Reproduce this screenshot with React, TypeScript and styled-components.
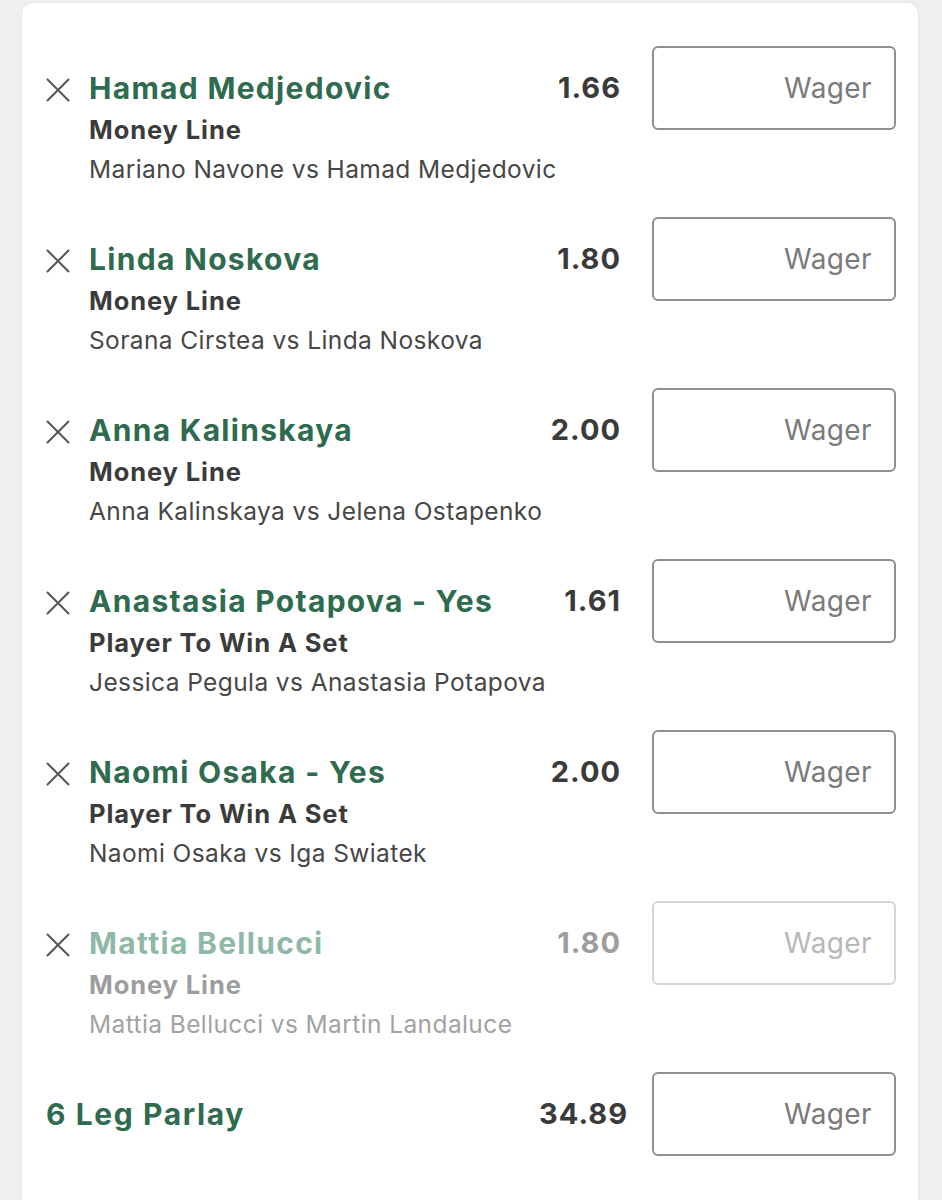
import styled, { createGlobalStyle } from 'styled-components';

const GlobalStyle = createGlobalStyle`
  html, body {
    margin: 0;
    padding: 0;
    background: #efefef;
  }
  body {
    font-family: Inter, "Noto Sans", "Liberation Sans", sans-serif;
    -webkit-font-smoothing: antialiased;
  }
`;

const Page = styled.div`
  padding: 3px 24px 0 22px;
`;

const Card = styled.div`
  background: #ffffff;
  border-radius: 10px;
  min-height: 1240px;
  padding: 43px 22px 0 24px;
  box-sizing: border-box;
  box-shadow: 0 0 0 1px #e6e6e6;
`;

const Row = styled.div`
  display: flex;
  align-items: flex-start;
  height: 171px;
`;

const ParlayRow = styled.div`
  display: flex;
  align-items: center;
  height: 84px;
`;

const RemoveButton = styled.button`
  all: unset;
  width: 24px;
  height: 24px;
  margin-top: 32px;
  margin-right: 19px;
  flex-shrink: 0;
  cursor: pointer;
  display: flex;
`;

const Info = styled.div`
  flex: 1;
  margin-top: 22px;
  min-width: 0;
`;

const Selection = styled.div<{ $faded?: boolean }>`
  font-size: 30px;
  font-weight: 700;
  line-height: 40px;
  letter-spacing: 1.3px;
  white-space: nowrap;
  color: ${(p) => (p.$faded ? '#8fb9a6' : '#2e6b4f')};
`;

const Market = styled.div<{ $faded?: boolean }>`
  font-size: 25.5px;
  font-weight: 700;
  line-height: 44px;
  letter-spacing: 0.9px;
  color: ${(p) => (p.$faded ? '#9d9d9d' : '#3b3b3b')};
`;

const Matchup = styled.div<{ $faded?: boolean }>`
  font-size: 24.5px;
  font-weight: 400;
  line-height: 34px;
  letter-spacing: 0.4px;
  color: ${(p) => (p.$faded ? '#a3a3a3' : '#474747')};
`;

const ParlayTitle = styled.div`
  flex: 1;
  font-size: 30px;
  font-weight: 700;
  color: #2e6b4f;
  letter-spacing: 1.6px;
`;

const Odds = styled.div<{ $faded?: boolean; $gap?: number; $top?: boolean }>`
  font-size: 29px;
  font-weight: 700;
  line-height: 40px;
  letter-spacing: 1px;
  margin-top: ${(p) => (p.$top ? '22px' : '0')};
  margin-right: ${(p) => p.$gap ?? 31}px;
  color: ${(p) => (p.$faded ? '#9d9d9d' : '#3a3a3a')};
  text-align: right;
`;

const WagerInput = styled.input<{ $faded?: boolean }>`
  width: 244px;
  height: 84px;
  box-sizing: border-box;
  flex-shrink: 0;
  border: 2px solid ${(p) => (p.$faded ? '#d6d6d6' : '#8f8f8f')};
  border-radius: 6px;
  padding: 0 22px;
  font-family: inherit;
  font-size: 28px;
  letter-spacing: 0.4px;
  text-align: right;
  background: #fff;
  outline: none;
  &::placeholder {
    color: ${(p) => (p.$faded ? '#b8b8b8' : '#7a7a7a')};
  }
`;

interface Leg {
  id: number;
  selection: string;
  market: string;
  matchup: string;
  odds: string;
  faded?: boolean;
}

const legs: Leg[] = [
  { id: 1, selection: 'Hamad Medjedovic', market: 'Money Line', matchup: 'Mariano Navone vs Hamad Medjedovic', odds: '1.66' },
  { id: 2, selection: 'Linda Noskova', market: 'Money Line', matchup: 'Sorana Cirstea vs Linda Noskova', odds: '1.80' },
  { id: 3, selection: 'Anna Kalinskaya', market: 'Money Line', matchup: 'Anna Kalinskaya vs Jelena Ostapenko', odds: '2.00' },
  { id: 4, selection: 'Anastasia Potapova - Yes', market: 'Player To Win A Set', matchup: 'Jessica Pegula vs Anastasia Potapova', odds: '1.61' },
  { id: 5, selection: 'Naomi Osaka - Yes', market: 'Player To Win A Set', matchup: 'Naomi Osaka vs Iga Swiatek', odds: '2.00' },
  { id: 6, selection: 'Mattia Bellucci', market: 'Money Line', matchup: 'Mattia Bellucci vs Martin Landaluce', odds: '1.80', faded: true },
];

const CloseIcon = () => (
  <svg width="24" height="24" viewBox="0 0 24 24" fill="none">
    <path d="M1.5 1.5 L22.5 22.5 M22.5 1.5 L1.5 22.5" stroke="#555" strokeWidth="2" strokeLinecap="round" />
  </svg>
);

export default function App() {
  return (
    <>
      <GlobalStyle />
      <Page>
        <Card>
          {legs.map((leg) => (
            <Row key={leg.id}>
              <RemoveButton aria-label="Remove">
                <CloseIcon />
              </RemoveButton>
              <Info>
                <Selection $faded={leg.faded}>{leg.selection}</Selection>
                <Market $faded={leg.faded}>{leg.market}</Market>
                <Matchup $faded={leg.faded}>{leg.matchup}</Matchup>
              </Info>
              <Odds $faded={leg.faded} $top>
                {leg.odds}
              </Odds>
              <WagerInput $faded={leg.faded} placeholder="Wager" />
            </Row>
          ))}
          <ParlayRow>
            <ParlayTitle>6 Leg Parlay</ParlayTitle>
            <Odds $gap={24}>34.89</Odds>
            <WagerInput placeholder="Wager" />
          </ParlayRow>
        </Card>
      </Page>
    </>
  );
}
